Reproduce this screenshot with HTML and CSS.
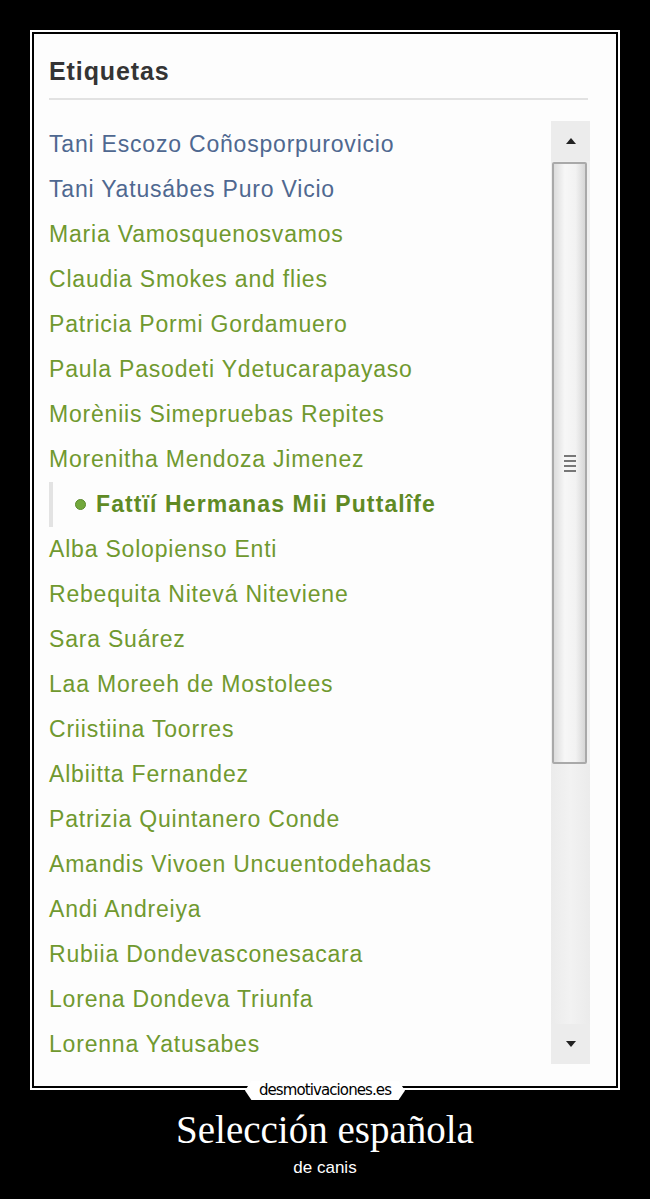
FILE: index.html
```html
<html lang="es">
<head>
    <title>Selección española</title>
    <link rel="stylesheet" href="styles.css">
</head>
<body>
    <div class="frame">
        <div class="panel">
            <h2 class="title">Etiquetas</h2>
            <div class="box">
                <ul class="tags">
                    <li class="blue">Tani Escozo Coñosporpurovicio</li>
                    <li class="blue">Tani Yatusábes Puro Vicio</li>
                    <li>Maria Vamosquenosvamos</li>
                    <li>Claudia Smokes and flies</li>
                    <li>Patricia Pormi Gordamuero</li>
                    <li>Paula Pasodeti Ydetucarapayaso</li>
                    <li>Morèniis Simepruebas Repites</li>
                    <li>Morenitha Mendoza Jimenez</li>
                    <li class="active"><span class="dot"></span>Fattïí Hermanas Mii Puttalîfe</li>
                    <li>Alba Solopienso Enti</li>
                    <li>Rebequita Nitevá Niteviene</li>
                    <li>Sara Suárez</li>
                    <li>Laa Moreeh de Mostolees</li>
                    <li>Criistiina Toorres</li>
                    <li>Albiitta Fernandez</li>
                    <li>Patrizia Quintanero Conde</li>
                    <li>Amandis Vivoen Uncuentodehadas</li>
                    <li>Andi Andreiya</li>
                    <li>Rubiia Dondevasconesacara</li>
                    <li>Lorena Dondeva Triunfa</li>
                    <li>Lorenna Yatusabes</li>
                </ul>
                <div class="scrollbar">
                    <div class="arrow up"></div>
                    <div class="thumb">
                        <div class="grip"><i></i><i></i><i></i><i></i></div>
                    </div>
                    <div class="track"></div>
                    <div class="arrow down"></div>
                </div>
            </div>
        </div>
        <div class="logo">desmotivaciones.es</div>
    </div>
    <h1 class="caption">Selección española</h1>
    <p class="sub">de canis</p>
</body>
</html>
```

FILE: styles.css
```css
body {
    margin: 0;
    background: #000;
    font-family: "Liberation Sans", Arial, sans-serif;
}
.frame {
    position: relative;
    margin: 30px 30px 0 30px;
    border: 2px solid #fff;
    padding: 2px;
    height: 1052px;
}
.panel {
    background: #fdfdfd;
    height: 100%;
    padding: 16px 26px 0 15px;
    box-sizing: border-box;
}
.title {
    margin: 0;
    font-size: 25px;
    line-height: 42px;
    font-weight: bold;
    color: #343434;
    letter-spacing: 0.9px;
    border-bottom: 2px solid #e2e2e2;
    margin-right: 2px;
    padding-bottom: 6px;
}
.box {
    display: flex;
    margin-top: 22px;
}
.tags {
    flex: 1;
    list-style: none;
    margin: 0;
    padding: 0;
    font-size: 23px;
    line-height: 45px;
    color: #70992f;
    letter-spacing: 0.8px;
}
.tags li {
    white-space: nowrap;
}
.tags .blue {
    color: #4f6890;
}
.tags .active {
    display: flex;
    align-items: center;
    font-weight: bold;
    color: #5f8a24;
    border-left: 4px solid #e3e3e3;
    padding-left: 22px;
    letter-spacing: 1.1px;
}
.dot {
    width: 9px;
    height: 9px;
    border-radius: 50%;
    background: #72a83c;
    border: 1px solid #5b8a2c;
    margin-right: 10px;
}
.scrollbar {
    width: 39px;
    height: 943px;
    margin-top: -1px;
    background: #efefef;
    display: flex;
    flex-direction: column;
}
.arrow {
    height: 40px;
    display: flex;
    justify-content: center;
    align-items: center;
    background: #ececec;
}
.arrow::after {
    content: "";
    border-left: 5px solid transparent;
    border-right: 5px solid transparent;
}
.up::after {
    border-bottom: 6px solid #222;
}
.down::after {
    border-top: 6px solid #222;
}
.thumb {
    height: 598px;
    margin: 1px 3px 0 1px;
    border: 2px solid #a9a9a9;
    border-radius: 2px;
    background: linear-gradient(to right, #dcdcdc, #f7f7f7 35%, #f2f2f2 70%, #d6d6d6);
    display: flex;
    justify-content: center;
    align-items: center;
}
.grip {
    display: flex;
    flex-direction: column;
    gap: 3px;
}
.grip i {
    width: 12px;
    height: 2px;
    background: #777;
}
.track {
    flex: 1;
    background: linear-gradient(to right, #ebebeb, #f2f2f2 50%, #ebebeb);
}
.logo {
    position: absolute;
    left: 213px;
    bottom: -12px;
    width: 160px;
    height: 19px;
    background: #fff;
    color: #000;
    font-family: "DejaVu Sans", sans-serif;
    font-size: 15px;
    line-height: 18px;
    letter-spacing: -0.9px;
    text-align: center;
    clip-path: polygon(4% 0, 96% 0, 100% 50%, 96% 100%, 4% 100%, 0 50%);
}
.caption {
    margin: 18px 0 0 0;
    font-family: "Liberation Serif", "Times New Roman", serif;
    font-weight: normal;
    font-size: 39px;
    line-height: 44px;
    color: #fff;
    text-align: center;
}
.sub {
    margin: 6px 0 0 0;
    font-size: 17px;
    color: #fff;
    text-align: center;
}
```
